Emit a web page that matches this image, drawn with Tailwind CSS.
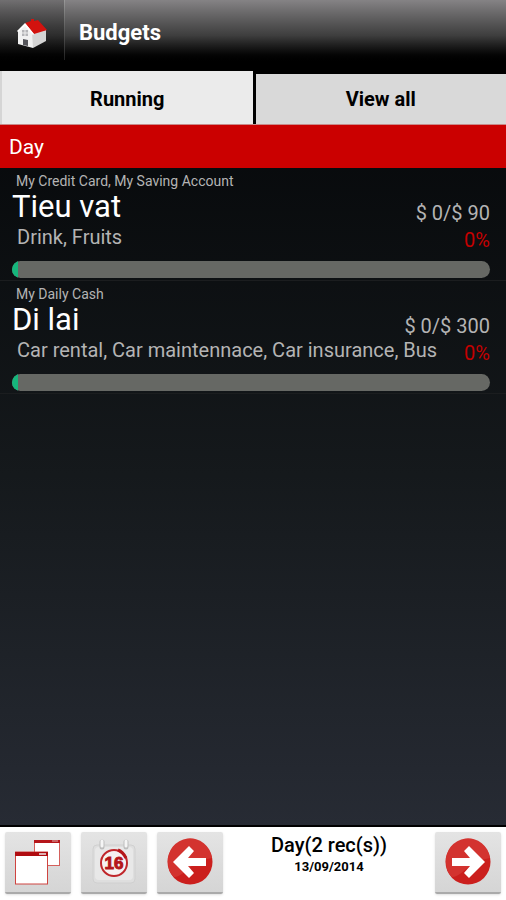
<!DOCTYPE html>
<html lang="en">
<head>
    <meta charset="UTF-8">
    <meta name="viewport" content="width=device-width, initial-scale=1.0">
    <title>Budgets</title>
    <script src="https://cdn.jsdelivr.net/npm/@tailwindcss/browser@4"></script>
</head>
<body class="bg-black font-['Roboto',sans-serif]">
    <div class="flex min-h-screen flex-col">
        <header class="flex h-[71px] items-start bg-linear-to-b from-[#858385] via-[#3e3e3e] via-50% to-black to-90%">
            <button type="button" aria-label="Home" class="flex h-[66px] w-16 items-center justify-center bg-linear-to-b from-black/15 to-black/40">
                <svg class="size-8" viewBox="0 0 32 32">
                    <path d="M2 14 10 6 17 15V31L2 27Z" fill="#f1f1f1"/>
                    <path d="M16 15 30 13V24L17 31Z" fill="#d4d4d4"/>
                    <path d="M9 6 15 4V2H18V4L22 3 31 13 18 17Z" fill="#d3120e"/>
                    <path d="M1 14 9 6 18 17 17 18 9 9 2 15Z" fill="#fff"/>
                    <path d="M6 13H12V19H6Z" fill="#b5b5b8"/>
                    <path d="M9 13V19M6 16H12" stroke="#eee" fill="none"/>
                    <path d="M7 22 12 23V29L7 28Z" fill="#55555a"/>
                </svg>
            </button>
            <div class="h-[60px] w-px bg-linear-to-b from-[#999] to-[#222]"></div>
            <h1 class="pl-[14px] text-[22px] leading-[66px] font-bold text-white">Budgets</h1>
        </header>

        <nav class="flex h-[54px] items-end gap-[3px] border-b border-[#c98a8a] bg-black text-xl font-bold text-black">
            <button type="button" class="h-full flex-1 border-l-2 border-[#d5d5d5] bg-[#ebebeb] pt-[3px]">Running</button>
            <button type="button" class="h-[50px] flex-1 bg-[#d9d9d9]">View all</button>
        </nav>

        <main class="flex flex-1 flex-col bg-linear-to-b from-[#07090b] via-[#15191c] to-[#272b34]">
            <h2 class="h-[43px] bg-[#cb0000] pl-[9px] text-[21px] leading-[44px] text-white">Day</h2>
            <ul>
                <li class="border-b border-[#1b1d1f] pt-1 pr-4 pb-[2px] pl-3">
                    <p class="pl-1 text-sm leading-[19px] text-[#b4b4b4]">My Credit Card, My Saving Account</p>
                    <div class="flex items-end justify-between">
                        <h3 class="text-[31px] leading-8 text-white">Tieu vat</h3>
                        <span class="text-xl leading-5 text-[#b4b4b4]">$ 0/$ 90</span>
                    </div>
                    <div class="flex items-end justify-between">
                        <p class="pl-[5px] text-xl leading-7 text-[#b4b4b4]">Drink, Fruits</p>
                        <span class="text-xl leading-[22px] text-[#c40000]">0%</span>
                    </div>
                    <div role="progressbar" aria-label="Tieu vat" aria-valuenow="0" aria-valuemin="0" aria-valuemax="100" class="mt-[10px] h-[17px] overflow-hidden rounded-full bg-[#666864]">
                        <div class="h-full w-[6px] bg-[#16b67c]"></div>
                    </div>
                </li>
                <li class="border-b border-[#1b1d1f] pt-1 pr-4 pb-[2px] pl-3">
                    <p class="pl-1 text-sm leading-[19px] text-[#b4b4b4]">My Daily Cash</p>
                    <div class="flex items-end justify-between">
                        <h3 class="text-[31px] leading-8 text-white">Di lai</h3>
                        <span class="text-xl leading-5 text-[#b4b4b4]">$ 0/$ 300</span>
                    </div>
                    <div class="flex items-end justify-between">
                        <p class="pl-[5px] text-xl leading-7 text-[#b4b4b4]">Car rental, Car maintennace, Car insurance, Bus</p>
                        <span class="text-xl leading-[22px] text-[#c40000]">0%</span>
                    </div>
                    <div role="progressbar" aria-label="Di lai" aria-valuenow="0" aria-valuemin="0" aria-valuemax="100" class="mt-[10px] h-[17px] overflow-hidden rounded-full bg-[#666864]">
                        <div class="h-full w-[6px] bg-[#16b67c]"></div>
                    </div>
                </li>
            </ul>
        </main>

        <footer class="flex h-[75px] items-start gap-[10px] border-t-2 border-black bg-white px-[5px] pt-[5px] text-black">
            <button type="button" aria-label="Windows" class="flex h-[62px] w-[66px] items-center justify-center rounded-xs border-b-2 border-[#aaa] bg-linear-to-b from-[#e4e4e4] to-[#d5d5d5] shadow-sm">
                <svg class="size-12" viewBox="0 0 48 48">
                    <rect x="20.5" y="2.5" width="25" height="25" fill="#fff" stroke="#d4605c"/>
                    <path d="M20 2H46V5H20Z" fill="#b5161a"/>
                    <path d="M38 3H44" stroke="#dcb0b0"/>
                    <rect x="1.500" y="14" width="32" height="32" fill="#fff" stroke="#cf4440"/>
                    <path d="M1 14H34V18H1Z" fill="#b00c10"/>
                    <path d="M25 16H32" stroke="#dcb0b0" stroke-width="2"/>
                </svg>
            </button>
            <button type="button" aria-label="Calendar" class="flex h-[62px] w-[66px] items-center justify-center rounded-xs border-b-2 border-[#aaa] bg-linear-to-b from-[#e4e4e4] to-[#d5d5d5] shadow-sm">
                <svg class="size-12" viewBox="0 0 48 48">
                    <rect x="3" y="7" width="42" height="38" rx="4" fill="#dedede" stroke="#d0d0d0"/>
                    <rect x="5" y="9" width="38" height="33" rx="4" fill="#e8e8e8"/>
                    <path d="M12 4V9M36 4V9" stroke="#bdbdbd" stroke-width="5" stroke-linecap="round"/>
                    <path d="M12 3V8M36 3V8" stroke="#f5f5f5" stroke-width="3" stroke-linecap="round"/>
                    <circle cx="24" cy="25" r="13" fill="#f5f2f2" stroke="#c0272b" stroke-width="2"/>
                    <path d="M28 12Q33 14 36 20" fill="none" stroke="#b5161a" stroke-width="3"/>
                    <text x="24" y="31" text-anchor="middle" font-family="Liberation Sans, sans-serif" font-size="17" font-weight="bold" fill="#b5161a" stroke="#b5161a">16</text>
                </svg>
            </button>
            <button type="button" aria-label="Previous day" class="flex h-[62px] w-[66px] items-center justify-center rounded-xs border-b-2 border-[#aaa] bg-linear-to-b from-[#e4e4e4] to-[#d5d5d5] shadow-sm">
                <svg class="size-12" viewBox="0 0 48 48">
                    <circle cx="24" cy="24" r="22.500" fill="#cb1f1d"/>
                    <path d="M2 25A22 22 0 0 1 46 20Q30 23 22 31 12 40 8 39 2 34 2 25Z" fill="#d3332f"/>
                    <path d="M7 24 23 8 28 13 22 20H40V28H22L28 35 23 40Z" fill="#fff"/>
                </svg>
            </button>
            <div class="flex-1 text-center">
                <p class="text-xl leading-[26px] font-medium">Day(2 rec(s))</p>
                <p class="text-[13px] leading-[18px] font-bold">13/09/2014</p>
            </div>
            <button type="button" aria-label="Next day" class="flex h-[62px] w-[66px] items-center justify-center rounded-xs border-b-2 border-[#aaa] bg-linear-to-b from-[#e4e4e4] to-[#d5d5d5] shadow-sm">
                <svg class="size-12" viewBox="0 0 48 48">
                    <circle cx="24" cy="24" r="22.500" fill="#cb1f1d"/>
                    <path d="M2 25A22 22 0 0 1 46 20Q30 23 22 31 12 40 8 39 2 34 2 25Z" fill="#d3332f"/>
                    <path d="M41 24 25 8 20 13 26 20H8V28H26L20 35 25 40Z" fill="#fff"/>
                </svg>
            </button>
        </footer>
    </div>
</body>
</html>
